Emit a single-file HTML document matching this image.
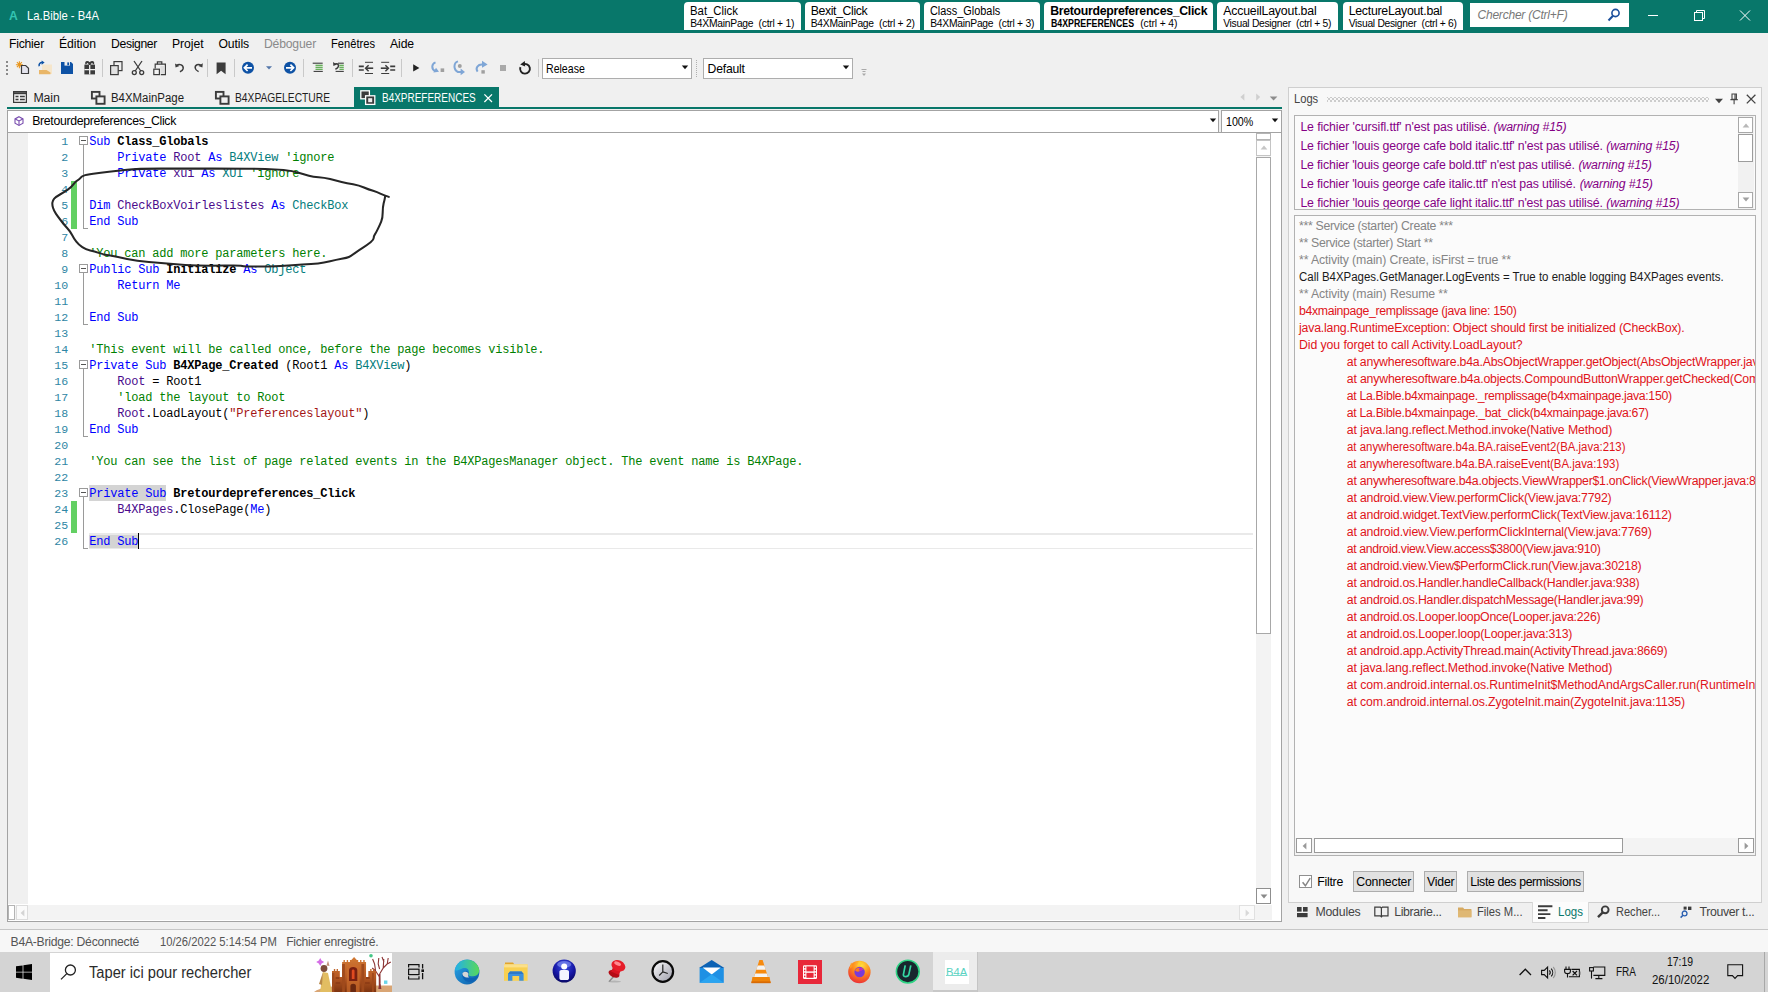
<!DOCTYPE html>
<html><head><meta charset="utf-8"><title>La.Bible - B4A</title>
<style>
html,body{margin:0;padding:0;}
body{width:1768px;height:992px;position:relative;overflow:hidden;background:#f0f0f0;font-family:"Liberation Sans",sans-serif;font-size:12px;color:#000;}
.root{position:absolute;left:0;top:0;width:1768px;height:992px;overflow:hidden;}
.a{position:absolute;}
.t{position:absolute;white-space:pre;}
svg{position:absolute;overflow:visible;}
.k{color:#0000ff;} .c{color:#008000;} .ty{color:#037c7c;} .v{color:#4a0a8c;} .s{color:#a31515;} .b{font-weight:bold;color:#000;}
</style></head><body><div class="root">
<div class="a" style="left:0px;top:0px;width:1768px;height:33px;background:#08776a;"></div>
<span class="t" style="left:8.8px;top:8px;font-size:13.2px;line-height:16px;color:#34c4b2;font-weight:bold;transform-origin:0 50%;transform:scaleX(0.9233);">A</span>
<span class="t" style="left:26.8px;top:8px;font-size:12.4px;line-height:16px;color:#fff;transform-origin:0 50%;transform:scaleX(0.9089);">La.Bible - B4A</span>
<div class="a" style="left:684px;top:2px;width:116.5px;height:27.5px;background:#fff;border-radius:4px 4px 0 0;"></div>
<span class="t" style="left:690.2px;top:3.2px;font-size:12.3px;line-height:16px;color:#000;transform-origin:0 50%;transform:scaleX(0.9239);">Bat_Click</span>
<span class="t" style="left:690.2px;top:16.2px;font-size:10.3px;line-height:16px;color:#000;letter-spacing:-0.244px;">B4XMainPage  (ctrl + 1)</span>
<div class="a" style="left:804.5px;top:2px;width:115.5px;height:27.5px;background:#fff;border-radius:4px 4px 0 0;"></div>
<span class="t" style="left:810.7px;top:3.2px;font-size:12.3px;line-height:16px;color:#000;letter-spacing:-0.375px;">Bexit_Click</span>
<span class="t" style="left:810.7px;top:16.2px;font-size:10.3px;line-height:16px;color:#000;letter-spacing:-0.244px;">B4XMainPage  (ctrl + 2)</span>
<div class="a" style="left:924px;top:2px;width:116px;height:27.5px;background:#fff;border-radius:4px 4px 0 0;"></div>
<span class="t" style="left:930.2px;top:3.2px;font-size:12.3px;line-height:16px;color:#000;transform-origin:0 50%;transform:scaleX(0.8865);">Class_Globals</span>
<span class="t" style="left:930.2px;top:16.2px;font-size:10.3px;line-height:16px;color:#000;letter-spacing:-0.244px;">B4XMainPage  (ctrl + 3)</span>
<div class="a" style="left:1044px;top:2px;width:168.5px;height:27.5px;background:#fff;border-radius:4px 4px 0 0;"></div>
<span class="t" style="left:1050.2px;top:3.2px;font-size:12.3px;line-height:16px;color:#000;font-weight:bold;letter-spacing:-0.297px;">Bretourdepreferences_Click</span>
<div class="a" style="left:1217px;top:2px;width:120.5px;height:27.5px;background:#fff;border-radius:4px 4px 0 0;"></div>
<span class="t" style="left:1223.2px;top:3.2px;font-size:12.3px;line-height:16px;color:#000;letter-spacing:-0.182px;">AccueilLayout.bal</span>
<span class="t" style="left:1223.2px;top:16.2px;font-size:10.3px;line-height:16px;color:#000;letter-spacing:-0.285px;">Visual Designer  (ctrl + 5)</span>
<div class="a" style="left:1342.5px;top:2px;width:120.0px;height:27.5px;background:#fff;border-radius:4px 4px 0 0;"></div>
<span class="t" style="left:1348.7px;top:3.2px;font-size:12.3px;line-height:16px;color:#000;letter-spacing:-0.257px;">LectureLayout.bal</span>
<span class="t" style="left:1348.7px;top:16.2px;font-size:10.3px;line-height:16px;color:#000;letter-spacing:-0.285px;">Visual Designer  (ctrl + 6)</span>
<span class="t" style="left:1050.5px;top:16.2px;font-size:10.3px;line-height:16px;color:#000;font-weight:bold;transform-origin:0 50%;transform:scaleX(0.8532);">B4XPREFERENCES</span>
<span class="t" style="left:1140.3px;top:16.2px;font-size:10.3px;line-height:16px;color:#000;letter-spacing:-0.105px;">(ctrl + 4)</span>
<div class="a" style="left:1470px;top:3px;width:159px;height:24px;background:#fff;"></div>
<span class="t" style="left:1477.5px;top:7px;font-size:12px;line-height:16px;color:#777;font-style:italic;letter-spacing:-0.217px;">Chercher (Ctrl+F)</span>
<svg style="left:1606px;top:7px" width="16" height="16" viewBox="0 0 16 16" fill="none" stroke="#1b4f9c" stroke-width="1.6"><circle cx="9.5" cy="6" r="3.6"/><path d="M7 8.8L2.5 13.5" stroke-width="2"/></svg>
<svg style="left:1640px;top:0" width="128" height="33" viewBox="0 0 128 33" fill="none" stroke="#fff" stroke-width="1"><path d="M8 15.5h10"/><rect x="54.5" y="12.5" width="8" height="8"/><path d="M56.5 12.5v-2h8v8h-2"/><path d="M100 10.5l10 10M110 10.5l-10 10"/></svg>
<span class="t" style="left:9px;top:35.7px;font-size:12.2px;line-height:16px;color:#000;letter-spacing:-0.225px;">Fichier</span>
<span class="t" style="left:59px;top:35.7px;font-size:12.2px;line-height:16px;color:#000;letter-spacing:-0.038px;">Édition</span>
<span class="t" style="left:111px;top:35.7px;font-size:12.2px;line-height:16px;color:#000;letter-spacing:-0.348px;">Designer</span>
<span class="t" style="left:172px;top:35.7px;font-size:12.2px;line-height:16px;color:#000;letter-spacing:-0.057px;">Projet</span>
<span class="t" style="left:218.5px;top:35.7px;font-size:12.2px;line-height:16px;color:#000;letter-spacing:-0.109px;">Outils</span>
<span class="t" style="left:264px;top:35.7px;font-size:12.2px;line-height:16px;color:#8a8a8a;letter-spacing:-0.191px;">Déboguer</span>
<span class="t" style="left:331px;top:35.7px;font-size:12.2px;line-height:16px;color:#000;transform-origin:0 50%;transform:scaleX(0.9146);">Fenêtres</span>
<span class="t" style="left:390px;top:35.7px;font-size:12.2px;line-height:16px;color:#000;letter-spacing:-0.102px;">Aide</span>
<div class="a" style="left:6.3px;top:61.2px;width:1.8px;height:1.8px;background:#8a8a8a;"></div>
<div class="a" style="left:6.3px;top:65.2px;width:1.8px;height:1.8px;background:#8a8a8a;"></div>
<div class="a" style="left:6.3px;top:69.2px;width:1.8px;height:1.8px;background:#8a8a8a;"></div>
<div class="a" style="left:6.3px;top:73.2px;width:1.8px;height:1.8px;background:#8a8a8a;"></div>
<svg style="left:14px;top:60px" width="16" height="16" viewBox="0 0 16 16" ><g stroke="#e8961e" stroke-width="1.1"><path d="M5.4 1.2v7M1.9 4.7h7M2.9 2.2l5 5M7.900 2.2l-5 5"/></g><path d="M7.5 5.5h4.2l2.8 2.8v5.2h-7z" fill="#e4e4ee" stroke="#3c3c3c" stroke-width="1.2"/></svg>
<svg style="left:37px;top:60px" width="16" height="16" viewBox="0 0 16 16" ><path d="M5 4.5h10v9.5h-10z" fill="#f6e6cb"/><path d="M2 10h7.5l4 2.6v1.6h-11.5z" fill="#e9b668"/><path d="M2.2 6.2c-.6-2 .8-4 3.4-3.6" fill="none" stroke="#0e52a5" stroke-width="1.5"/><path d="M4.6 0.6l3 2-3 2.2z" fill="#0e52a5"/></svg>
<svg style="left:59px;top:60px" width="16" height="16" viewBox="0 0 16 16" ><path d="M2 2h10l2 2v10h-12z" fill="#0e52a5"/><rect x="5.5" y="2" width="5.5" height="3.6" fill="#f0f0f0"/><rect x="8.3" y="2.4" width="1.8" height="2.8" fill="#0e52a5"/></svg>
<svg style="left:80.6px;top:60px" width="16" height="16" viewBox="0 0 16 16" ><rect x="3.400" y="4.600" width="10.600" height="9.800" fill="#3c3c3c"/><path d="M8.700 4.600v9.800M3.400 9.700h10.600" stroke="#f0f0f0" stroke-width="1.300"/><path d="M8.700 4.800c-.6-3.600-4.800-3.600-3.400-.8M8.700 4.800c.6-3.600 4.800-3.600 3.400-.8" fill="none" stroke="#3c3c3c" stroke-width="1.800"/></svg>
<div class="a" style="left:102.0px;top:59px;width:1px;height:18px;background:#c9c9c9;"></div>
<svg style="left:108px;top:60px" width="16" height="16" viewBox="0 0 16 16" ><rect x="6" y="1.6" width="8" height="9" fill="#f0f0f0" stroke="#3c3c3c" stroke-width="1.2"/><rect x="2.6" y="5.6" width="7.6" height="9" fill="#e2e2e2" stroke="#3c3c3c" stroke-width="1.2"/></svg>
<svg style="left:129.8px;top:60px" width="16" height="16" viewBox="0 0 16 16" ><g fill="none" stroke="#3c3c3c" stroke-width="1.3"><path d="M4 1l6.8 10M12 1l-6.8 10"/><circle cx="4.3" cy="12.6" r="2"/><circle cx="11.7" cy="12.6" r="2"/></g></svg>
<svg style="left:150.7px;top:60px" width="16" height="16" viewBox="0 0 16 16" ><g fill="none" stroke="#3c3c3c" stroke-width="1.200"><path d="M6.400 4.200v-2.400h4.400v2.400"/><path d="M4.200 8.600v-4.400h10.200v10.400h-4.600"/><rect x="2.800" y="9.200" width="5.600" height="5.400" fill="#f4f4f4"/></g><rect x="9.400" y="6" width="4" height="7.600" fill="#dedede"/></svg>
<svg style="left:171.5px;top:60px" width="16" height="16" viewBox="0 0 16 16" ><path d="M4.5 5.5c3-2.4 7.4-.4 6.6 3.2-.4 1.6-1.6 2.6-3.2 3" fill="none" stroke="#3c3c3c" stroke-width="1.5"/><path d="M3 3.4l.6 4.2 3.8-1.6z" fill="#3c3c3c"/></svg>
<svg style="left:189.7px;top:60px" width="16" height="16" viewBox="0 0 16 16" ><path d="M11.2 5.4c-2.8-2-6.4-.6-6 2.6.2 1.6 1.6 2.8 3.4 3.6" fill="none" stroke="#3c3c3c" stroke-width="1.5"/><path d="M12.8 3.2l-.4 4.4-4-1.6z" fill="#3c3c3c"/></svg>
<div class="a" style="left:206.9px;top:59px;width:1px;height:18px;background:#c9c9c9;"></div>
<svg style="left:213.4px;top:60px" width="16" height="16" viewBox="0 0 16 16" ><path d="M3.600 2.400h9v11.800l-4.500-3.400-4.500 3.400z" fill="#3c3c3c"/></svg>
<div class="a" style="left:234.1px;top:59px;width:1px;height:18px;background:#c9c9c9;"></div>
<svg style="left:240px;top:60px" width="16" height="16" viewBox="0 0 16 16" ><circle cx="8" cy="7.800" r="6" fill="#0e52a5"/><path d="M12 7.8h-7M7.6 4.6l-3.2 3.2 3.2 3.2" fill="none" stroke="#fff" stroke-width="1.7"/></svg>
<svg style="left:261px;top:60px" width="16" height="16" viewBox="0 0 16 16" ><path d="M5 6.2h6l-3 3.2z" fill="#5577aa"/></svg>
<svg style="left:282px;top:60px" width="16" height="16" viewBox="0 0 16 16" ><circle cx="8" cy="7.800" r="6" fill="#0e52a5"/><path d="M4 7.8h7M8.4 4.6l3.2 3.2-3.2 3.2" fill="none" stroke="#fff" stroke-width="1.7"/></svg>
<div class="a" style="left:303.0px;top:59px;width:1px;height:18px;background:#c9c9c9;"></div>
<svg style="left:309.5px;top:60px" width="16" height="16" viewBox="0 0 16 16" ><g stroke-width="1.1"><path d="M2.7 3.2h10" stroke="#3c3c3c"/><path d="M5.5 5.3h7.2M5.5 7.3h7.2M5.5 9.3h7.2" stroke="#3a9a2a"/><path d="M3.6 11.4h9.2" stroke="#3c3c3c"/></g></svg>
<svg style="left:331.4px;top:60px" width="16" height="16" viewBox="0 0 16 16" ><g stroke-width="1.100"><path d="M7 3.200h5.800" stroke="#3c3c3c"/><path d="M8.400 5.300h4.400M8.400 7.300h4.400M8.400 9.300h4.400" stroke="#3a9a2a"/><path d="M4.600 11.400h8.200" stroke="#3c3c3c"/></g><path d="M3.400 4.400c2.200-1.600 4.800-.2 4 2.200-.4 1.200-1.600 2-3 2.600" fill="none" stroke="#3c3c3c" stroke-width="1.500"/><path d="M2 2l.4 4 3.400-1.600z" fill="#3c3c3c"/></svg>
<div class="a" style="left:351.7px;top:59px;width:1px;height:18px;background:#c9c9c9;"></div>
<svg style="left:358px;top:60px" width="16" height="16" viewBox="0 0 16 16" ><g stroke="#3c3c3c"><path d="M7 2.3h8M7 13.5h8" stroke-width="1"/><path d="M.8 6.4h5M.8 10h5" stroke-width="1.7"/><path d="M15.2 8.2h-7" stroke-width="1.6"/><path d="M10.6 5.2l-3 3 3 3" fill="none" stroke-width="1.5"/></g></svg>
<svg style="left:379.7px;top:60px" width="16" height="16" viewBox="0 0 16 16" ><g stroke="#3c3c3c"><path d="M1.2 2.3h8M1.2 13.5h8" stroke-width="1"/><path d="M10.2 6.4h5M10.2 10h5" stroke-width="1.7"/><path d="M.8 8.2h7" stroke-width="1.6"/><path d="M5.4 5.2l3 3-3 3" fill="none" stroke-width="1.5"/></g></svg>
<div class="a" style="left:400.9px;top:59px;width:1px;height:18px;background:#c9c9c9;"></div>
<svg style="left:407.7px;top:60px" width="16" height="16" viewBox="0 0 16 16" ><path d="M5.2 4.2l6.2 3.7-6.2 3.7z" fill="#222"/></svg>
<svg style="left:428.6px;top:60px" width="16" height="16" viewBox="0 0 16 16" ><path d="M6.5 2.4c-4 1.6-4.4 6.4-.4 8.6" fill="none" stroke="#7fa6d6" stroke-width="2"/><path d="M4.4 12.4l5.6-.6-3-4z" fill="#7fa6d6"/><rect x="11.6" y="8.4" width="3.6" height="3.6" fill="#a0a0a0"/></svg>
<svg style="left:450.7px;top:60px" width="16" height="16" viewBox="0 0 16 16" ><path d="M7 1.4c-4.4 1.2-5 8 0 10.6h3" fill="none" stroke="#7fa6d6" stroke-width="2"/><path d="M9.6 8.6l4.4 3.4-4.4 3.2z" fill="#7fa6d6"/><circle cx="8.8" cy="6" r="2" fill="#a0a0a0"/></svg>
<svg style="left:472.7px;top:60px" width="16" height="16" viewBox="0 0 16 16" ><path d="M4.6 11.6c-2.6-3.6.4-7.4 5-7" fill="none" stroke="#7fa6d6" stroke-width="2"/><path d="M9 .8l5.6 3.6-5.6 3.4z" fill="#7fa6d6"/><rect x="8.4" y="10.2" width="3.4" height="3.4" fill="#a0a0a0"/></svg>
<div class="a" style="left:500px;top:65.2px;width:6px;height:5.6px;background:#a9a9a9;"></div>
<svg style="left:517.1px;top:60px" width="16" height="16" viewBox="0 0 16 16" ><path d="M5.600 4.500a4.900 4.900 0 1 1-2.200 2.600" fill="none" stroke="#222" stroke-width="1.900"/><path d="M7.800 1l-4.600 3.600 5 1.800z" fill="#222"/></svg>
<div class="a" style="left:538.0px;top:59px;width:1px;height:18px;background:#c9c9c9;"></div>
<div class="a" style="left:542.3px;top:57.5px;width:149.5px;height:21.0px;background:#fff;border:1px solid #adadad;box-sizing:border-box;"></div>
<span class="t" style="left:546.2px;top:60.9px;font-size:12.2px;line-height:16px;color:#000;transform-origin:0 50%;transform:scaleX(0.8676);">Release</span>
<svg style="left:681.4px;top:65.4px" width="8" height="5" viewBox="0 0 8 5"><path d="M.8 .6h6.4l-3.2 3.6z" fill="#111"/></svg>
<div class="a" style="left:696px;top:60px;width:1px;height:1px;background:#b0b0b0;"></div>
<div class="a" style="left:696px;top:62px;width:1px;height:1px;background:#b0b0b0;"></div>
<div class="a" style="left:696px;top:64px;width:1px;height:1px;background:#b0b0b0;"></div>
<div class="a" style="left:696px;top:66px;width:1px;height:1px;background:#b0b0b0;"></div>
<div class="a" style="left:696px;top:68px;width:1px;height:1px;background:#b0b0b0;"></div>
<div class="a" style="left:696px;top:70px;width:1px;height:1px;background:#b0b0b0;"></div>
<div class="a" style="left:696px;top:72px;width:1px;height:1px;background:#b0b0b0;"></div>
<div class="a" style="left:696px;top:74px;width:1px;height:1px;background:#b0b0b0;"></div>
<div class="a" style="left:696px;top:76px;width:1px;height:1px;background:#b0b0b0;"></div>
<div class="a" style="left:703.2px;top:57.5px;width:149.5px;height:21.0px;background:#fff;border:1px solid #adadad;box-sizing:border-box;"></div>
<span class="t" style="left:707.6px;top:60.9px;font-size:12.2px;line-height:16px;color:#000;letter-spacing:-0.204px;">Default</span>
<svg style="left:842.4px;top:65.4px" width="8" height="5" viewBox="0 0 8 5"><path d="M.8 .6h6.4l-3.2 3.6z" fill="#111"/></svg>
<svg style="left:860px;top:68px" width="9" height="9" viewBox="0 0 9 9"><path d="M1.5 1.5h5M2.5 3.5h3" stroke="#aaa" stroke-width="1"/><path d="M2 5.5h4l-2 2.4z" fill="#aaa"/></svg>
<svg style="left:13px;top:91px" width="14" height="12" viewBox="0 0 14 12" fill="none" stroke="#3c3c3c"><rect x=".6" y=".6" width="12.8" height="10.8" stroke-width="1.2"/><path d="M.6 2.2h12.8" stroke-width="2"/><path d="M2.5 5.5h3M2.5 8.5h3M7 5.5h4.8M7 8.5h4.8" stroke-width="1.3"/></svg>
<span class="t" style="left:33.4px;top:89.6px;font-size:12.3px;line-height:16px;color:#1e1e1e;letter-spacing:-0.089px;">Main</span>
<svg style="left:91px;top:91px" width="15" height="14" viewBox="0 0 15 14" fill="none" stroke="#3c3c3c" stroke-width="1.9"><rect x=".9" y=".9" width="7.6" height="6.6" fill="none"/><rect x="5.4" y="5.4" width="8.2" height="7.4" fill="#f0f0f0"/></svg>
<span class="t" style="left:111.1px;top:89.6px;font-size:12.3px;line-height:16px;color:#1e1e1e;transform-origin:0 50%;transform:scaleX(0.9285);">B4XMainPage</span>
<svg style="left:215px;top:91px" width="15" height="14" viewBox="0 0 15 14" fill="none" stroke="#3c3c3c" stroke-width="1.9"><rect x=".9" y=".9" width="7.6" height="6.6" fill="none"/><rect x="5.4" y="5.4" width="8.2" height="7.4" fill="#f0f0f0"/></svg>
<span class="t" style="left:235px;top:89.6px;font-size:12.3px;line-height:16px;color:#1e1e1e;transform-origin:0 50%;transform:scaleX(0.8340);">B4XPAGELECTURE</span>
<div class="a" style="left:354px;top:87px;width:144.8px;height:22px;background:#08776a;"></div>
<svg style="left:360.4px;top:90.3px" width="16" height="16" viewBox="0 0 16 16" stroke="#fff" stroke-width="1.3"><rect x=".8" y=".8" width="8.6" height="8" fill="#3a3a3a"/><rect x="5.6" y="5.8" width="9.2" height="8.6" fill="#3a3a3a"/><rect x="8.2" y="8.2" width="4" height="4" fill="#eee" stroke="none"/></svg>
<span class="t" style="left:381.5px;top:89.5px;font-size:12.3px;line-height:16px;color:#fff;transform-origin:0 50%;transform:scaleX(0.8113);">B4XPREFERENCES</span>
<svg style="left:484px;top:93.7px" width="8.4" height="8.4" viewBox="0 0 8.4 8.4" stroke="#fff" stroke-width="1.3"><path d="M.4 .4l7.6 7.6M8 .4l-7.6 7.6"/></svg>
<div class="a" style="left:6.5px;top:107.2px;width:1275.5px;height:2.2px;background:#08776a;"></div>
<svg style="left:1238px;top:92px" width="42" height="12" viewBox="0 0 42 12"><path d="M6.4 1.4v7.4l-4-3.7z" fill="#cfcfcf"/><path d="M18.2 1.4v7.4l4-3.7z" fill="#cfcfcf"/><path d="M31.8 4.6h7.6l-3.8 4z" fill="#8c8c8c"/></svg>
<div class="a" style="left:7px;top:109.5px;width:1212px;height:23px;background:#fff;border:1px solid #a3a3a3;box-sizing:border-box;"></div>
<div class="a" style="left:1221px;top:109.5px;width:60.5px;height:23px;background:#fff;border:1px solid #a3a3a3;box-sizing:border-box;"></div>
<svg style="left:13.6px;top:116.2px" width="10" height="10" viewBox="0 0 10 10" fill="none" stroke="#7a4fb0" stroke-width="1.1"><path d="M5 .7l4 2.2v4.3l-4 2.2-4-2.2v-4.3z"/><path d="M1.2 3l3.8 2 3.8-2M5 5v4.2"/></svg>
<span class="t" style="left:32.2px;top:113px;font-size:12.3px;line-height:16px;color:#000;letter-spacing:-0.332px;">Bretourdepreferences_Click</span>
<span class="t" style="left:1225.6px;top:113.6px;font-size:12.3px;line-height:16px;color:#000;transform-origin:0 50%;transform:scaleX(0.8680);">100%</span>
<svg style="left:1208.6px;top:118.4px" width="8" height="5" viewBox="0 0 8 5"><path d="M.8 .5h6.4l-3.2 3.7z" fill="#111"/></svg>
<svg style="left:1270.6px;top:118.4px" width="8" height="5" viewBox="0 0 8 5"><path d="M.8 .5h6.4l-3.2 3.7z" fill="#111"/></svg>
<div class="a" style="left:7px;top:132px;width:1274.5px;height:790px;background:#fff;border:1px solid #a3a3a3;box-sizing:border-box;"></div>
<div class="a" style="left:8px;top:133px;width:19.5px;height:771px;background:#f0f0f0;"></div>
<div class="a" style="left:1256px;top:133px;width:15px;height:771px;background:#f3f3f3;"></div>
<div class="a" style="left:1256.2px;top:133.2px;width:14.6px;height:6.4px;background:#fff;border:1px solid #b4b4b4;box-sizing:border-box;"></div>
<div class="a" style="left:1256.2px;top:140.4px;width:14.6px;height:15.2px;background:#fff;border:1px solid #c4c4c4;box-sizing:border-box;"></div>
<svg style="left:1259.5px;top:145px" width="8" height="5" viewBox="0 0 8 5"><path d="M.6 4.4h6.8l-3.4-3.8z" fill="#c6c6c6"/></svg>
<div class="a" style="left:1256.2px;top:157.2px;width:14.6px;height:476.5px;background:#fff;border:1px solid #a8a8a8;box-sizing:border-box;"></div>
<div class="a" style="left:1256.2px;top:888.2px;width:14.6px;height:15.6px;background:#fff;border:1px solid #8f8f8f;box-sizing:border-box;"></div>
<svg style="left:1259.5px;top:893.6px" width="8" height="5" viewBox="0 0 8 5"><path d="M.6 .6h6.8l-3.4 3.8z" fill="#8a8a8a"/></svg>
<div class="a" style="left:8px;top:904.5px;width:1264px;height:15.5px;background:#f3f3f3;"></div>
<div class="a" style="left:8.2px;top:905px;width:6.4px;height:14.8px;background:#fff;border:1px solid #b4b4b4;box-sizing:border-box;"></div>
<div class="a" style="left:15.6px;top:905px;width:12.6px;height:14.8px;background:#fafafa;border:1px solid #dcdcdc;box-sizing:border-box;"></div>
<svg style="left:19.5px;top:908.8px" width="5" height="8" viewBox="0 0 5 8"><path d="M4.4 .6v6.8l-3.8-3.4z" fill="#d4d4d4"/></svg>
<div class="a" style="left:1239.4px;top:905px;width:15.4px;height:14.8px;background:#fafafa;border:1px solid #e0e0e0;box-sizing:border-box;"></div>
<svg style="left:1245px;top:908.8px" width="5" height="8" viewBox="0 0 5 8"><path d="M.6 .6v6.8l3.8-3.4z" fill="#d8d8d8"/></svg>
<div class="a" style="left:89px;top:485px;width:77px;height:16px;background:#d4d4d4;"></div>
<div class="a" style="left:89px;top:533px;width:49.2px;height:16px;background:#d4d4d4;"></div>
<div class="a" style="left:89px;top:533.2px;width:1164px;height:1.6px;background:#e9e9e9;"></div>
<div class="a" style="left:89px;top:547.6px;width:1164px;height:1.6px;background:#e9e9e9;"></div>
<div class="a" style="left:137.8px;top:533px;width:1.2px;height:16px;background:#000;"></div>
<div class="a" style="left:71px;top:181px;width:6px;height:48px;background:#63d063;"></div>
<div class="a" style="left:71px;top:501px;width:6px;height:32px;background:#63d063;"></div>
<div class="a" style="left:83px;top:145px;width:1px;height:83px;background:#9a9a9a;"></div>
<div class="a" style="left:83px;top:228px;width:5px;height:1px;background:#9a9a9a;"></div>
<div class="a" style="left:79px;top:136px;width:9px;height:9px;background:#fff;border:1px solid #9a9a9a;box-sizing:border-box;"></div>
<div class="a" style="left:81px;top:140px;width:5px;height:1px;background:#555;"></div>
<div class="a" style="left:83px;top:273px;width:1px;height:51px;background:#9a9a9a;"></div>
<div class="a" style="left:83px;top:324px;width:5px;height:1px;background:#9a9a9a;"></div>
<div class="a" style="left:79px;top:264px;width:9px;height:9px;background:#fff;border:1px solid #9a9a9a;box-sizing:border-box;"></div>
<div class="a" style="left:81px;top:268px;width:5px;height:1px;background:#555;"></div>
<div class="a" style="left:83px;top:369px;width:1px;height:67px;background:#9a9a9a;"></div>
<div class="a" style="left:83px;top:436px;width:5px;height:1px;background:#9a9a9a;"></div>
<div class="a" style="left:79px;top:360px;width:9px;height:9px;background:#fff;border:1px solid #9a9a9a;box-sizing:border-box;"></div>
<div class="a" style="left:81px;top:364px;width:5px;height:1px;background:#555;"></div>
<div class="a" style="left:83px;top:497px;width:1px;height:51px;background:#9a9a9a;"></div>
<div class="a" style="left:83px;top:548px;width:5px;height:1px;background:#9a9a9a;"></div>
<div class="a" style="left:79px;top:488px;width:9px;height:9px;background:#fff;border:1px solid #9a9a9a;box-sizing:border-box;"></div>
<div class="a" style="left:81px;top:492px;width:5px;height:1px;background:#555;"></div>
<span class="t" style="left:61.2px;top:134.4px;font-size:11.6px;line-height:16px;color:#2e86a4;font-family:'Liberation Mono',monospace;letter-spacing:0.031px;">1</span>
<span class="t" style="left:89.3px;top:134.4px;font-size:12px;line-height:16px;color:#000;font-family:'Liberation Mono',monospace;letter-spacing:-0.202px;"><span class="k">Sub</span> <span class="b">Class_Globals</span></span>
<span class="t" style="left:61.2px;top:150.4px;font-size:11.6px;line-height:16px;color:#2e86a4;font-family:'Liberation Mono',monospace;letter-spacing:0.031px;">2</span>
<span class="t" style="left:89.3px;top:150.4px;font-size:12px;line-height:16px;color:#000;font-family:'Liberation Mono',monospace;letter-spacing:-0.203px;">    <span class="k">Private</span> <span class="v">Root</span> <span class="k">As</span> <span class="ty">B4XView</span> <span class="c">'ignore</span></span>
<span class="t" style="left:61.2px;top:166.4px;font-size:11.6px;line-height:16px;color:#2e86a4;font-family:'Liberation Mono',monospace;letter-spacing:0.031px;">3</span>
<span class="t" style="left:89.3px;top:166.4px;font-size:12px;line-height:16px;color:#000;font-family:'Liberation Mono',monospace;letter-spacing:-0.203px;">    <span class="k">Private</span> <span class="v">xui</span> <span class="k">As</span> <span class="ty">XUI</span> <span class="c">'ignore</span></span>
<span class="t" style="left:61.2px;top:182.4px;font-size:11.6px;line-height:16px;color:#2e86a4;font-family:'Liberation Mono',monospace;letter-spacing:0.031px;">4</span>
<span class="t" style="left:61.2px;top:198.4px;font-size:11.6px;line-height:16px;color:#2e86a4;font-family:'Liberation Mono',monospace;letter-spacing:0.031px;">5</span>
<span class="t" style="left:89.3px;top:198.4px;font-size:12px;line-height:16px;color:#000;font-family:'Liberation Mono',monospace;letter-spacing:-0.202px;"><span class="k">Dim</span> <span class="v">CheckBoxVoirleslistes</span> <span class="k">As</span> <span class="ty">CheckBox</span></span>
<span class="t" style="left:61.2px;top:214.4px;font-size:11.6px;line-height:16px;color:#2e86a4;font-family:'Liberation Mono',monospace;letter-spacing:0.031px;">6</span>
<span class="t" style="left:89.3px;top:214.4px;font-size:12px;line-height:16px;color:#000;font-family:'Liberation Mono',monospace;letter-spacing:-0.203px;"><span class="k">End Sub</span></span>
<span class="t" style="left:61.2px;top:230.4px;font-size:11.6px;line-height:16px;color:#2e86a4;font-family:'Liberation Mono',monospace;letter-spacing:0.031px;">7</span>
<span class="t" style="left:61.2px;top:246.4px;font-size:11.6px;line-height:16px;color:#2e86a4;font-family:'Liberation Mono',monospace;letter-spacing:0.031px;">8</span>
<span class="t" style="left:89.3px;top:246.4px;font-size:12px;line-height:16px;color:#000;font-family:'Liberation Mono',monospace;letter-spacing:-0.201px;"><span class="c">'You can add more parameters here.</span></span>
<span class="t" style="left:61.2px;top:262.4px;font-size:11.6px;line-height:16px;color:#2e86a4;font-family:'Liberation Mono',monospace;letter-spacing:0.031px;">9</span>
<span class="t" style="left:89.3px;top:262.4px;font-size:12px;line-height:16px;color:#000;font-family:'Liberation Mono',monospace;letter-spacing:-0.202px;"><span class="k">Public Sub</span> <span class="b">Initialize</span> <span class="k">As</span> <span class="ty">Object</span></span>
<span class="t" style="left:54.2px;top:278.4px;font-size:11.6px;line-height:16px;color:#2e86a4;font-family:'Liberation Mono',monospace;letter-spacing:0.039px;">10</span>
<span class="t" style="left:89.3px;top:278.4px;font-size:12px;line-height:16px;color:#000;font-family:'Liberation Mono',monospace;letter-spacing:-0.202px;">    <span class="k">Return Me</span></span>
<span class="t" style="left:54.2px;top:294.4px;font-size:11.6px;line-height:16px;color:#2e86a4;font-family:'Liberation Mono',monospace;letter-spacing:0.039px;">11</span>
<span class="t" style="left:54.2px;top:310.4px;font-size:11.6px;line-height:16px;color:#2e86a4;font-family:'Liberation Mono',monospace;letter-spacing:0.039px;">12</span>
<span class="t" style="left:89.3px;top:310.4px;font-size:12px;line-height:16px;color:#000;font-family:'Liberation Mono',monospace;letter-spacing:-0.203px;"><span class="k">End Sub</span></span>
<span class="t" style="left:54.2px;top:326.4px;font-size:11.6px;line-height:16px;color:#2e86a4;font-family:'Liberation Mono',monospace;letter-spacing:0.039px;">13</span>
<span class="t" style="left:54.2px;top:342.4px;font-size:11.6px;line-height:16px;color:#2e86a4;font-family:'Liberation Mono',monospace;letter-spacing:0.039px;">14</span>
<span class="t" style="left:89.3px;top:342.4px;font-size:12px;line-height:16px;color:#000;font-family:'Liberation Mono',monospace;letter-spacing:-0.201px;"><span class="c">'This event will be called once, before the page becomes visible.</span></span>
<span class="t" style="left:54.2px;top:358.4px;font-size:11.6px;line-height:16px;color:#2e86a4;font-family:'Liberation Mono',monospace;letter-spacing:0.039px;">15</span>
<span class="t" style="left:89.3px;top:358.4px;font-size:12px;line-height:16px;color:#000;font-family:'Liberation Mono',monospace;letter-spacing:-0.202px;"><span class="k">Private Sub</span> <span class="b">B4XPage_Created</span> (Root1 <span class="k">As</span> <span class="ty">B4XView</span>)</span>
<span class="t" style="left:54.2px;top:374.4px;font-size:11.6px;line-height:16px;color:#2e86a4;font-family:'Liberation Mono',monospace;letter-spacing:0.039px;">16</span>
<span class="t" style="left:89.3px;top:374.4px;font-size:12px;line-height:16px;color:#000;font-family:'Liberation Mono',monospace;letter-spacing:-0.202px;">    <span class="v">Root</span> = Root1</span>
<span class="t" style="left:54.2px;top:390.4px;font-size:11.6px;line-height:16px;color:#2e86a4;font-family:'Liberation Mono',monospace;letter-spacing:0.039px;">17</span>
<span class="t" style="left:89.3px;top:390.4px;font-size:12px;line-height:16px;color:#000;font-family:'Liberation Mono',monospace;letter-spacing:-0.201px;">    <span class="c">'load the layout to Root</span></span>
<span class="t" style="left:54.2px;top:406.4px;font-size:11.6px;line-height:16px;color:#2e86a4;font-family:'Liberation Mono',monospace;letter-spacing:0.039px;">18</span>
<span class="t" style="left:89.3px;top:406.4px;font-size:12px;line-height:16px;color:#000;font-family:'Liberation Mono',monospace;letter-spacing:-0.202px;">    <span class="v">Root</span>.LoadLayout(<span class="s">"Preferenceslayout"</span>)</span>
<span class="t" style="left:54.2px;top:422.4px;font-size:11.6px;line-height:16px;color:#2e86a4;font-family:'Liberation Mono',monospace;letter-spacing:0.039px;">19</span>
<span class="t" style="left:89.3px;top:422.4px;font-size:12px;line-height:16px;color:#000;font-family:'Liberation Mono',monospace;letter-spacing:-0.203px;"><span class="k">End Sub</span></span>
<span class="t" style="left:54.2px;top:438.4px;font-size:11.6px;line-height:16px;color:#2e86a4;font-family:'Liberation Mono',monospace;letter-spacing:0.039px;">20</span>
<span class="t" style="left:54.2px;top:454.4px;font-size:11.6px;line-height:16px;color:#2e86a4;font-family:'Liberation Mono',monospace;letter-spacing:0.039px;">21</span>
<span class="t" style="left:89.3px;top:454.4px;font-size:12px;line-height:16px;color:#000;font-family:'Liberation Mono',monospace;letter-spacing:-0.201px;"><span class="c">'You can see the list of page related events in the B4XPagesManager object. The event name is B4XPage.</span></span>
<span class="t" style="left:54.2px;top:470.4px;font-size:11.6px;line-height:16px;color:#2e86a4;font-family:'Liberation Mono',monospace;letter-spacing:0.039px;">22</span>
<span class="t" style="left:54.2px;top:486.4px;font-size:11.6px;line-height:16px;color:#2e86a4;font-family:'Liberation Mono',monospace;letter-spacing:0.039px;">23</span>
<span class="t" style="left:89.3px;top:486.4px;font-size:12px;line-height:16px;color:#000;font-family:'Liberation Mono',monospace;letter-spacing:-0.201px;"><span class="k">Private Sub</span> <span class="b">Bretourdepreferences_Click</span></span>
<span class="t" style="left:54.2px;top:502.4px;font-size:11.6px;line-height:16px;color:#2e86a4;font-family:'Liberation Mono',monospace;letter-spacing:0.039px;">24</span>
<span class="t" style="left:89.3px;top:502.4px;font-size:12px;line-height:16px;color:#000;font-family:'Liberation Mono',monospace;letter-spacing:-0.202px;">    <span class="v">B4XPages</span>.ClosePage(<span class="k">Me</span>)</span>
<span class="t" style="left:54.2px;top:518.4px;font-size:11.6px;line-height:16px;color:#2e86a4;font-family:'Liberation Mono',monospace;letter-spacing:0.039px;">25</span>
<span class="t" style="left:54.2px;top:534.4px;font-size:11.6px;line-height:16px;color:#2e86a4;font-family:'Liberation Mono',monospace;letter-spacing:0.039px;">26</span>
<span class="t" style="left:89.3px;top:534.4px;font-size:12px;line-height:16px;color:#000;font-family:'Liberation Mono',monospace;letter-spacing:-0.203px;"><span class="k">End Sub</span></span>
<svg style="left:0;top:0" width="1768" height="992" viewBox="0 0 1768 992" fill="none"><path d="M388.8 196.9Q383.3 195.1 380.3 193.6Q377.3 192.1 373.1 190.8Q368.8 189.6 364.0 187.5Q359.1 185.4 353.1 184.3Q347.0 183.2 341.6 181.9Q336.2 180.6 330.1 179.1Q324.0 177.5 318.6 177.2Q313.2 176.9 308.9 175.7Q304.7 174.5 298.6 172.7Q292.6 170.9 283.5 170.0Q274.4 169.1 265.4 168.9Q256.3 168.7 248.2 168.7Q240.0 168.7 212.6 168.6Q185.2 168.5 161.0 168.6Q136.8 168.7 127.1 169.8Q117.4 170.9 109.0 171.8Q100.5 172.7 93.2 173.8Q86.0 174.8 83.8 175.6Q81.7 176.3 80.5 177.9Q79.3 179.4 77.5 180.3Q75.7 181.2 73.6 184.2Q71.5 187.2 67.8 189.6Q64.2 192.1 60.0 194.5Q55.7 196.9 54.2 198.7Q52.7 200.5 52.4 202.7Q52.1 204.8 53.0 207.8Q53.9 210.8 56.0 213.9Q58.1 216.9 60.9 220.5Q63.6 224.1 66.9 227.8Q70.2 231.4 72.1 235.0Q73.9 238.6 76.3 241.6Q78.7 244.7 82.3 247.1Q86.0 249.5 90.2 250.4Q94.4 251.3 98.7 252.9Q102.9 254.4 110.2 255.6Q117.4 256.8 127.1 258.9Q136.8 261.0 148.9 261.9Q161.0 262.8 173.1 264.1Q185.2 265.3 197.3 265.6Q209.4 265.9 224.7 265.6Q240.0 265.3 242.1 265.9Q244.2 266.5 256.3 266.5Q268.4 266.5 280.5 265.9Q292.6 265.3 302.3 264.6Q312.0 264.0 318.0 263.4Q324.0 262.8 330.1 261.3Q336.2 259.8 341.6 258.8Q347.0 257.8 348.9 257.0Q350.7 256.2 354.9 253.1Q359.1 250.1 363.4 247.4Q367.6 244.7 370.6 242.3Q373.7 239.9 373.7 238.1Q373.7 236.2 374.9 234.4Q376.1 232.6 377.9 228.9Q379.7 225.3 381.2 221.7Q382.7 218.1 382.7 212.6Q382.7 207.2 383.6 203.6Q384.6 199.9 384.9 197.9L385.2 195.8" stroke="#262626" stroke-width="2.050" stroke-linecap="round" stroke-linejoin="round"/></svg>
<div class="a" style="left:1288px;top:87px;width:474px;height:816px;background:#f8f8f8;border:1px solid #cfcfcf;box-sizing:border-box;"></div>
<span class="t" style="left:1294.4px;top:91.2px;font-size:12.3px;line-height:16px;color:#444;transform-origin:0 50%;transform:scaleX(0.9073);">Logs</span>
<div class="a" style="left:1327px;top:97px;width:382px;height:5px;background-image:radial-gradient(circle,#b4b4b4 0.6px,transparent 0.9px),radial-gradient(circle,#b4b4b4 0.6px,transparent 0.9px);background-size:4px 4px;background-position:0 0,2px 2px;"></div>
<svg style="left:1714px;top:98px" width="10" height="6" viewBox="0 0 10 6"><path d="M1 .8h8l-4 4.4z" fill="#444"/></svg>
<svg style="left:1729px;top:93px" width="10" height="12" viewBox="0 0 10 12" fill="none" stroke="#444" stroke-width="1.1"><path d="M3 1h4.4v5.4h-4.4zM6 1v5M1.4 6.6h7.4M5.1 6.8v4.4"/></svg>
<svg style="left:1746px;top:94px" width="10" height="10" viewBox="0 0 10 10" stroke="#444" stroke-width="1.3"><path d="M.8 .8l8.6 8.6M9.4 .8l-8.6 8.6"/></svg>
<div class="a" style="left:1294px;top:115px;width:462px;height:95px;background:#fbfbfb;border:1px solid #b2b2b2;box-sizing:border-box;"></div>
<span class="t" style="left:1300.4px;top:118.9px;font-size:12.3px;line-height:16px;color:#850085;letter-spacing:-0.110px;">Le fichier 'cursifl.ttf' n'est pas utilisé.</span>
<span class="t" style="left:1493.6px;top:118.9px;font-size:12.3px;line-height:16px;color:#850085;font-style:italic;letter-spacing:-0.184px;">(warning #15)</span>
<span class="t" style="left:1300.4px;top:137.9px;font-size:12.3px;line-height:16px;color:#850085;letter-spacing:-0.127px;">Le fichier 'louis george cafe bold italic.ttf' n'est pas utilisé.</span>
<span class="t" style="left:1606.3px;top:137.9px;font-size:12.3px;line-height:16px;color:#850085;font-style:italic;letter-spacing:-0.153px;">(warning #15)</span>
<span class="t" style="left:1300.4px;top:156.9px;font-size:12.3px;line-height:16px;color:#850085;letter-spacing:-0.142px;">Le fichier 'louis george cafe bold.ttf' n'est pas utilisé.</span>
<span class="t" style="left:1578.4px;top:156.9px;font-size:12.3px;line-height:16px;color:#850085;font-style:italic;letter-spacing:-0.153px;">(warning #15)</span>
<span class="t" style="left:1300.4px;top:175.9px;font-size:12.3px;line-height:16px;color:#850085;letter-spacing:-0.143px;">Le fichier 'louis george cafe italic.ttf' n'est pas utilisé.</span>
<span class="t" style="left:1579.7px;top:175.9px;font-size:12.3px;line-height:16px;color:#850085;font-style:italic;letter-spacing:-0.176px;">(warning #15)</span>
<span class="t" style="left:1300.4px;top:194.9px;font-size:12.3px;line-height:16px;color:#850085;letter-spacing:-0.114px;">Le fichier 'louis george cafe light italic.ttf' n'est pas utilisé.</span>
<span class="t" style="left:1606.3px;top:194.9px;font-size:12.3px;line-height:16px;color:#850085;font-style:italic;letter-spacing:-0.153px;">(warning #15)</span>
<div class="a" style="left:1295px;top:209px;width:460px;height:7px;background:#f8f8f8;"></div>
<div class="a" style="left:1294px;top:209px;width:462px;height:1px;background:#b2b2b2;"></div>
<div class="a" style="left:1738px;top:116px;width:16px;height:93px;background:#f1f1f1;"></div>
<div class="a" style="left:1738.4px;top:117px;width:14.6px;height:15.6px;background:#fff;border:1px solid #a8a8a8;box-sizing:border-box;"></div>
<svg style="left:1741.6px;top:123px" width="8" height="5" viewBox="0 0 8 5"><path d="M.6 4.4h6.8l-3.4-3.8z" fill="#b8b8b8"/></svg>
<div class="a" style="left:1738.4px;top:134.4px;width:14.6px;height:27.2px;background:#fff;border:1px solid #9c9c9c;box-sizing:border-box;"></div>
<div class="a" style="left:1738.4px;top:191.8px;width:14.6px;height:15.8px;background:#fff;border:1px solid #a8a8a8;box-sizing:border-box;"></div>
<svg style="left:1741.6px;top:197.4px" width="8" height="5" viewBox="0 0 8 5"><path d="M.6 .6h6.8l-3.4 3.8z" fill="#a0a0a0"/></svg>
<div class="a" style="left:1294px;top:215px;width:462px;height:641px;background:#fbfbfb;border:1px solid #b2b2b2;box-sizing:border-box;"></div>
<span class="t" style="left:1299px;top:218px;font-size:12.3px;line-height:16px;color:#858585;letter-spacing:-0.301px;">*** Service (starter) Create ***</span>
<span class="t" style="left:1299px;top:235px;font-size:12.3px;line-height:16px;color:#858585;letter-spacing:-0.315px;">** Service (starter) Start **</span>
<span class="t" style="left:1299px;top:252px;font-size:12.3px;line-height:16px;color:#858585;letter-spacing:-0.131px;">** Activity (main) Create, isFirst = true **</span>
<span class="t" style="left:1299px;top:269px;font-size:12.3px;line-height:16px;color:#1a1a1a;transform-origin:0 50%;transform:scaleX(0.9321);">Call B4XPages.GetManager.LogEvents = True to enable logging B4XPages events.</span>
<span class="t" style="left:1299px;top:286px;font-size:12.3px;line-height:16px;color:#858585;letter-spacing:-0.108px;">** Activity (main) Resume **</span>
<span class="t" style="left:1299px;top:303px;font-size:12.3px;line-height:16px;color:#e0141a;letter-spacing:-0.339px;">b4xmainpage_remplissage (java line: 150)</span>
<span class="t" style="left:1299px;top:320px;font-size:12.3px;line-height:16px;color:#e0141a;letter-spacing:-0.194px;">java.lang.RuntimeException: Object should first be initialized (CheckBox).</span>
<span class="t" style="left:1299px;top:337px;font-size:12.3px;line-height:16px;color:#e0141a;letter-spacing:-0.089px;">Did you forget to call Activity.LoadLayout?</span>
<span class="t" style="left:1346.8px;top:354px;font-size:12.3px;line-height:16px;color:#e0141a;letter-spacing:-0.204px;">at anywheresoftware.b4a.AbsObjectWrapper.getObject(AbsObjectWrapper.java:50)</span>
<span class="t" style="left:1346.8px;top:371px;font-size:12.3px;line-height:16px;color:#e0141a;letter-spacing:-0.176px;">at anywheresoftware.b4a.objects.CompoundButtonWrapper.getChecked(CompoundButtonWrapper.java:27)</span>
<span class="t" style="left:1346.8px;top:388px;font-size:12.3px;line-height:16px;color:#e0141a;letter-spacing:-0.327px;">at La.Bible.b4xmainpage._remplissage(b4xmainpage.java:150)</span>
<span class="t" style="left:1346.8px;top:405px;font-size:12.3px;line-height:16px;color:#e0141a;letter-spacing:-0.307px;">at La.Bible.b4xmainpage._bat_click(b4xmainpage.java:67)</span>
<span class="t" style="left:1346.8px;top:422px;font-size:12.3px;line-height:16px;color:#e0141a;letter-spacing:-0.106px;">at java.lang.reflect.Method.invoke(Native Method)</span>
<span class="t" style="left:1346.8px;top:439px;font-size:12.3px;line-height:16px;color:#e0141a;transform-origin:0 50%;transform:scaleX(0.9281);">at anywheresoftware.b4a.BA.raiseEvent2(BA.java:213)</span>
<span class="t" style="left:1346.8px;top:456px;font-size:12.3px;line-height:16px;color:#e0141a;transform-origin:0 50%;transform:scaleX(0.9283);">at anywheresoftware.b4a.BA.raiseEvent(BA.java:193)</span>
<span class="t" style="left:1346.8px;top:473px;font-size:12.3px;line-height:16px;color:#e0141a;letter-spacing:-0.252px;">at anywheresoftware.b4a.objects.ViewWrapper$1.onClick(ViewWrapper.java:80)</span>
<span class="t" style="left:1346.8px;top:490px;font-size:12.3px;line-height:16px;color:#e0141a;letter-spacing:-0.196px;">at android.view.View.performClick(View.java:7792)</span>
<span class="t" style="left:1346.8px;top:507px;font-size:12.3px;line-height:16px;color:#e0141a;letter-spacing:-0.201px;">at android.widget.TextView.performClick(TextView.java:16112)</span>
<span class="t" style="left:1346.8px;top:524px;font-size:12.3px;line-height:16px;color:#e0141a;letter-spacing:-0.185px;">at android.view.View.performClickInternal(View.java:7769)</span>
<span class="t" style="left:1346.8px;top:541px;font-size:12.3px;line-height:16px;color:#e0141a;letter-spacing:-0.367px;">at android.view.View.access$3800(View.java:910)</span>
<span class="t" style="left:1346.8px;top:558px;font-size:12.3px;line-height:16px;color:#e0141a;letter-spacing:-0.245px;">at android.view.View$PerformClick.run(View.java:30218)</span>
<span class="t" style="left:1346.8px;top:575px;font-size:12.3px;line-height:16px;color:#e0141a;letter-spacing:-0.228px;">at android.os.Handler.handleCallback(Handler.java:938)</span>
<span class="t" style="left:1346.8px;top:592px;font-size:12.3px;line-height:16px;color:#e0141a;letter-spacing:-0.242px;">at android.os.Handler.dispatchMessage(Handler.java:99)</span>
<span class="t" style="left:1346.8px;top:609px;font-size:12.3px;line-height:16px;color:#e0141a;letter-spacing:-0.222px;">at android.os.Looper.loopOnce(Looper.java:226)</span>
<span class="t" style="left:1346.8px;top:626px;font-size:12.3px;line-height:16px;color:#e0141a;letter-spacing:-0.217px;">at android.os.Looper.loop(Looper.java:313)</span>
<span class="t" style="left:1346.8px;top:643px;font-size:12.3px;line-height:16px;color:#e0141a;letter-spacing:-0.206px;">at android.app.ActivityThread.main(ActivityThread.java:8669)</span>
<span class="t" style="left:1346.8px;top:660px;font-size:12.3px;line-height:16px;color:#e0141a;letter-spacing:-0.106px;">at java.lang.reflect.Method.invoke(Native Method)</span>
<span class="t" style="left:1346.8px;top:677px;font-size:12.3px;line-height:16px;color:#e0141a;letter-spacing:-0.088px;">at com.android.internal.os.RuntimeInit$MethodAndArgsCaller.run(RuntimeInit.java:576)</span>
<span class="t" style="left:1346.8px;top:694px;font-size:12.3px;line-height:16px;color:#e0141a;letter-spacing:-0.137px;">at com.android.internal.os.ZygoteInit.main(ZygoteInit.java:1135)</span>
<div class="a" style="left:1755px;top:216px;width:6.4px;height:645px;background:#f8f8f8;"></div>
<div class="a" style="left:1755px;top:215px;width:1px;height:641px;background:#b2b2b2;"></div>
<div class="a" style="left:1761px;top:87px;width:1px;height:816px;background:#cfcfcf;"></div>
<div class="a" style="left:1762px;top:110px;width:6px;height:800px;background:#f0f0f0;"></div>
<div class="a" style="left:1295px;top:837.5px;width:460px;height:17px;background:#f3f3f3;"></div>
<div class="a" style="left:1296px;top:838px;width:16px;height:15px;background:#fff;border:1px solid #9a9a9a;box-sizing:border-box;"></div>
<svg style="left:1301.5px;top:841.8px" width="5" height="8" viewBox="0 0 5 8"><path d="M4.4 .6v6.8l-3.8-3.4z" fill="#9a9a9a"/></svg>
<div class="a" style="left:1313.5px;top:838px;width:309.5px;height:15px;background:#fff;border:1px solid #9a9a9a;box-sizing:border-box;"></div>
<div class="a" style="left:1738px;top:838px;width:16px;height:15px;background:#fff;border:1px solid #9a9a9a;box-sizing:border-box;"></div>
<svg style="left:1743.5px;top:841.8px" width="5" height="8" viewBox="0 0 5 8"><path d="M.6 .6v6.8l3.8-3.4z" fill="#9a9a9a"/></svg>
<div class="a" style="left:1299px;top:875px;width:13.4px;height:13.4px;background:#fff;border:1px solid #8f8f8f;box-sizing:border-box;"></div>
<svg style="left:1300.5px;top:876.5px" width="11" height="11" viewBox="0 0 11 11" fill="none" stroke="#858585" stroke-width="1.500"><path d="M1.600 5.200l2.800 3.600 4.800-7.600"/></svg>
<span class="t" style="left:1317.3px;top:873.9px;font-size:12.3px;line-height:16px;color:#000;letter-spacing:-0.271px;">Filtre</span>
<div class="a" style="left:1352.9px;top:871px;width:60.899999999999864px;height:20.6px;background:#e1e1e1;border:1px solid #adadad;box-sizing:border-box;"></div>
<span class="t" style="left:1356.3px;top:873.9px;font-size:12.3px;line-height:16px;color:#000;letter-spacing:-0.217px;">Connecter</span>
<div class="a" style="left:1423.8px;top:871px;width:32.90000000000009px;height:20.6px;background:#e1e1e1;border:1px solid #adadad;box-sizing:border-box;"></div>
<span class="t" style="left:1427.1px;top:873.9px;font-size:12.3px;line-height:16px;color:#000;letter-spacing:-0.240px;">Vider</span>
<div class="a" style="left:1467px;top:871px;width:116.70000000000005px;height:20.6px;background:#e1e1e1;border:1px solid #adadad;box-sizing:border-box;"></div>
<span class="t" style="left:1470.3px;top:873.9px;font-size:12.3px;line-height:16px;color:#000;letter-spacing:-0.374px;">Liste des permissions</span>
<div class="a" style="left:1531.5px;top:902px;width:57px;height:20.5px;background:#fcfcfc;border:1px solid #d8d8d8;box-sizing:border-box;border-top:none;"></div>
<svg style="left:1297.300px;top:906.800px" width="11" height="11" viewBox="0 0 11 11" fill="#3c3c3c"><rect x="0" y="0" width="4.6" height="4.6"/><rect x="6" y="0" width="4.6" height="4.6"/><rect x="0" y="6" width="10.6" height="4.2"/></svg>
<span class="t" style="left:1315.4px;top:903.5px;font-size:12.3px;line-height:16px;color:#444;letter-spacing:-0.183px;">Modules</span>
<svg style="left:1374px;top:905.5px" width="15" height="12" viewBox="0 0 15 12" fill="none" stroke="#3c3c3c" stroke-width="1.2"><path d="M.8 1.2h5.6l1 1 1-1h5.6v8.6h-5.6l-1 1-1-1h-5.6z"/><path d="M7.4 2.2v8.4"/></svg>
<span class="t" style="left:1394.2px;top:903.5px;font-size:12.3px;line-height:16px;color:#444;letter-spacing:-0.342px;">Librarie...</span>
<svg style="left:1457.7px;top:905.5px" width="14" height="12" viewBox="0 0 14 12"><path d="M0 1.6h5l1.2 1.4h7.2v8.2h-13.4z" fill="#d6aa62"/><path d="M0 4.400h13.400v6.800h-13.400z" fill="#dfb874"/></svg>
<span class="t" style="left:1477px;top:903.5px;font-size:12.3px;line-height:16px;color:#444;transform-origin:0 50%;transform:scaleX(0.9123);">Files M...</span>
<svg style="left:1537.500px;top:905px" width="15" height="14" viewBox="0 0 15 14" stroke="#3c3c3c" stroke-width="1.900"><path d="M0 1.300h14.400M0 5.200h9.600M0 9.100h12.400M0 13h7.400"/></svg>
<span class="t" style="left:1558.1px;top:903.5px;font-size:12.3px;line-height:16px;color:#08776a;transform-origin:0 50%;transform:scaleX(0.9336);">Logs</span>
<svg style="left:1597.4px;top:905px" width="13" height="13" viewBox="0 0 13 13" fill="none" stroke="#3c3c3c"><circle cx="8.2" cy="4.8" r="3.4" stroke-width="1.9"/><path d="M5.8 7.4l-4.8 4.8" stroke-width="2.4"/></svg>
<span class="t" style="left:1616.3px;top:903.5px;font-size:12.3px;line-height:16px;color:#444;transform-origin:0 50%;transform:scaleX(0.8980);">Recher...</span>
<svg style="left:1679.8px;top:905.6px" width="12" height="12" viewBox="0 0 12 12" fill="none"><rect x="3.6" y=".6" width="3" height="3" fill="#3c3c3c"/><rect x="8" y=".6" width="3.4" height="3.4" fill="#3c3c3c"/><circle cx="4.6" cy="7.4" r="2.4" stroke="#2a5fb0" stroke-width="1.3"/><path d="M3 9.2l-2.4 2.4" stroke="#2a5fb0" stroke-width="1.5"/></svg>
<span class="t" style="left:1699.5px;top:903.5px;font-size:12.3px;line-height:16px;color:#444;letter-spacing:-0.350px;">Trouver t...</span>
<div class="a" style="left:0px;top:929px;width:1768px;height:1px;background:#c6c6c6;"></div>
<div class="a" style="left:0px;top:930px;width:1768px;height:22px;background:#f7f7f7;"></div>
<span class="t" style="left:10.5px;top:934px;font-size:12.2px;line-height:16px;color:#555;letter-spacing:-0.252px;">B4A-Bridge: Déconnecté</span>
<span class="t" style="left:159.8px;top:934px;font-size:12.2px;line-height:16px;color:#555;transform-origin:0 50%;transform:scaleX(0.9217);">10/26/2022 5:14:54 PM</span>
<span class="t" style="left:286.2px;top:934px;font-size:12.2px;line-height:16px;color:#555;letter-spacing:-0.281px;">Fichier enregistré.</span>
<div class="a" style="left:0px;top:952px;width:1768px;height:40px;background:#d4d4d4;"></div>
<svg style="left:16px;top:964px" width="16" height="16" viewBox="0 0 16 16" fill="#000"><path d="M0 2.3l6.6-.9v6.3h-6.6zM7.4 1.3l8.6-1.2v7.6h-8.6zM0 8.4h6.6v6.3l-6.6-.9zM7.4 8.4h8.6v7.6l-8.6-1.2z"/></svg>
<div class="a" style="left:49.5px;top:953px;width:342px;height:39px;background:#fff;"></div>
<svg style="left:60px;top:964px" width="17" height="16" viewBox="0 0 17 16" fill="none" stroke="#222" stroke-width="1.3"><circle cx="10.4" cy="6" r="5"/><path d="M6.8 9.6l-5.8 5.8"/></svg>
<span class="t" style="left:88.5px;top:963px;font-size:15.6px;line-height:20px;color:#2b2b2b;transform-origin:0 50%;transform:scaleX(0.9415);">Taper ici pour rechercher</span>
<svg style="left:312px;top:953px" width="80" height="39" viewBox="0 0 80 39"><defs><linearGradient id="cas" x1="0" y1="0" x2="0" y2="1"><stop offset="0" stop-color="#d27a34"/><stop offset=".55" stop-color="#b85a24"/><stop offset="1" stop-color="#7e3410"/></linearGradient></defs>
<path d="M2 39c6-5 20-6.5 40-6.5h38v6.5z" fill="#d9a574"/>
<path d="M67.5 35c.4-6 .2-10 0-14M67.6 24l-4-6-1-7M63.6 18l-3.4-3M67.6 21l3.6-6 .6-9M71.2 15l4-4 1-6M67.6 16l-1.4-5 .6-6M62.6 11l-2-5M72 9l-2-5M75.2 11l3.6-2" fill="none" stroke="#8c3434" stroke-width="1.100"/><path d="M67.600 36v-15" stroke="#8c3434" stroke-width="1.700"/>
<path d="M66.4 36l1-5h1l1 5z" fill="#8c3434"/>
<g transform="translate(20 0) scale(0.92 1) translate(-20 0)"><path d="M20 39v-21h2v-2h1.5v2h1.5v-2h1.500v2h2v6h2.500v-15h1.500v-2h1.500v2h2v-2h1.500v2h2v-2h1.500l3 -3l3 3h1.500v2h2v-2h1.500v2h2v-2h1.500v2h1.500v15h2.500v-6h2v-2h1.500v2h1.500v-2h1.500v2h2v21z" fill="url(#cas)"/>
<path d="M31 39v-28h3v28zM52 39v-28h3v28zM20 39v-19h2.500v19zM63.500 39v-19h2v19z" fill="#a04a1c"/>
<path d="M36 12h14v27h-14z" fill="#cc6c2c" opacity=".7"/>
<path d="M38.500 28v-11c0-4 9-4 9 0v11z" fill="#7a2010"/>
<path d="M41.500 26v-8c0-2 3-2 3 0v8z" fill="#e04a20"/>
<path d="M40 39v-6c0-3 6-3 6 0v6z" fill="#6a2810"/>
<path d="M24 30h5M56 30h5M24 25h4M57 25h4" stroke="#8a3a14" stroke-width="1.4"/>
</g>
<circle cx="12" cy="15.500" r="3.400" fill="#7c4c3a"/>
<path d="M14.500 12.500l1.500-5 1.500 5.500z" fill="#c09078"/>
<path d="M8 39l3-20 5 1 4 19z" fill="#e2bd62"/>
<path d="M11 19l-4 12 3 1z" fill="#b88848"/>
<path d="M8.200 5l1.400 2.600 2.600 1.400-2.600 1.400-1.400 2.600-1.400-2.600-2.600-1.400 2.600-1.400z" fill="#d46ee6"/>
<circle cx="59" cy="2.800" r="1.800" fill="#46c686"/>
<rect x="72" y="27.500" width="3.400" height="3.400" fill="#6ad6e8"/>
</svg>
<svg style="left:408px;top:964px" width="16" height="16" viewBox="0 0 16 16" fill="none" stroke="#111" stroke-width="1.2"><path d="M.6 3.400v-2.800h10.400v2.800M.6 12.200v2.800h10.400v-2.800"/><rect x=".6" y="5.200" width="10.400" height="5.400"/><path d="M14.600 0v4.600M14.600 9v6.200" stroke-width="1.300"/><rect x="13.400" y="5.400" width="2.600" height="2.600" fill="#111" stroke="none"/></svg>
<svg style="left:454px;top:959px" width="26" height="26" viewBox="0 0 26 26"><defs><linearGradient id="eg1" x1="0" y1="0" x2="1" y2="1"><stop offset="0" stop-color="#2aa8e8"/><stop offset="1" stop-color="#0c5aa8"/></linearGradient><linearGradient id="eg2" x1="0" y1="0" x2="1" y2="0"><stop offset="0" stop-color="#22b0e8"/><stop offset="1" stop-color="#58d85a"/></linearGradient></defs>
<circle cx="13" cy="13" r="12.400" fill="url(#eg1)"/>
<path d="M1 11c1-7 8-11 14-10 7 1 11 7 10 12-1 4-5 5-9 4-2-.600-2-2-1.500-3 1.500-4-3-6-6.500-4.500-3 1.200-5 3-7 1.500z" fill="url(#eg2)"/>
<path d="M9 13.500c3-2.500 7-.500 5.500 2.500-1 2 1 3.500 4.500 3 2-.400 3.500-1 4.500-2-2 6-9 8-13 4-2.500-2.500-3-5.500-1.500-7.500z" fill="#0e62b4"/>
<path d="M8.500 14c2.500-2.500 6-1 6 1-.500 1.500-.500 2.500.5 3.500-4 .5-7-1.500-6.500-4.500z" fill="#d6d6d6"/></svg>
<svg style="left:504px;top:962px" width="24" height="20" viewBox="0 0 24 20"><path d="M1 .6h8l1.400 1.800h-9.400z" fill="#e3a52c"/><path d="M0 2.400h23.600v16.400h-23.600z" fill="#f8d052"/><path d="M0 2.400h23.600v3h-23.600z" fill="#fbe08a"/><path d="M4 18.800v-6.800l2-2.400h11.600l2 2.400v6.800h-4.400v-4.800h-6.800v4.800z" fill="#3c90de"/><path d="M4 12l2-2.400h11.600l2 2.400z" fill="#2c78c8"/></svg>
<svg style="left:552px;top:959px" width="24" height="24" viewBox="0 0 24 24"><defs><radialGradient id="bp" cx=".5" cy=".3" r=".8"><stop offset="0" stop-color="#3c52e6"/><stop offset=".55" stop-color="#1616a4"/><stop offset="1" stop-color="#04044a"/></radialGradient></defs><circle cx="12.200" cy="12" r="11.600" fill="url(#bp)"/><ellipse cx="12.200" cy="5.400" rx="7" ry="3.400" fill="#a0b0ff" opacity=".5"/><circle cx="12.200" cy="7.400" r="3" fill="#fff"/><path d="M7.400 12.800c0-1 1-1.800 2-1.800h5.600c1 0 2 .8 2 1.800v6.400c0 1-1 1.800-2 1.800h-5.600c-1 0-2-.8-2-1.800z" fill="#f4f4ff"/></svg>
<svg style="left:606px;top:959px" width="22" height="24" viewBox="0 0 22 24"><ellipse cx="8.500" cy="22.600" rx="6.500" ry="1" fill="#b4b4b4"/><path d="M7.600 17.500l-4.400 5" stroke="#8a8a8a" stroke-width="1.400"/><ellipse cx="8" cy="14.800" rx="5.800" ry="3.400" transform="rotate(24 8 14.800)" fill="#b40c16"/><path d="M5 12.500l3.500-7 7 3.500-2.500 7z" fill="#d81422"/><ellipse cx="12.400" cy="6.800" rx="7.200" ry="5.400" transform="rotate(24 12.400 6.800)" fill="#e61e2a"/><ellipse cx="11.600" cy="4.600" rx="3.600" ry="1.800" transform="rotate(24 11.600 4.600)" fill="#ff8a90"/></svg>
<svg style="left:651px;top:960px" width="24" height="24" viewBox="0 0 24 24"><defs><linearGradient id="cg" x1="0" y1="0" x2="1" y2="1"><stop offset="0" stop-color="#fff"/><stop offset="1" stop-color="#9a9aa8"/></linearGradient></defs><circle cx="11.800" cy="11.500" r="10.300" fill="url(#cg)" stroke="#0a0a0a" stroke-width="2.200"/><path d="M11.800 4.500v7.400l5 1.600M11.800 11.900l-3.600 3.600" fill="none" stroke="#222" stroke-width="1.200"/></svg>
<svg style="left:699px;top:960px" width="26" height="23" viewBox="0 0 26 23"><path d="M0 8l12.700-8 12.700 8z" fill="#0c62b4"/><path d="M.6 8h24.200v14.800h-24.200z" fill="#1e90e4"/><path d="M3.600 7.600h18.200l-9.100 7z" fill="#fff"/><path d="M.6 22.800l12.100-8.600 12.100 8.600z" fill="#2aa4f0"/></svg>
<svg style="left:751px;top:960px" width="20" height="24" viewBox="0 0 20 24"><path d="M8.400 0h3.200l5.400 17h-14z" fill="#f78a0e"/><path d="M6.700 5.400h6.600l1.400 4.400h-9.400zM4.200 13.400h11.600l1.100 3.600h-13.800z" fill="#f4f4f4"/><path d="M1.400 17h17.200l1 6h-19.200z" fill="#f08408"/><path d="M.4 21.400h19.200v1.800h-19.200z" fill="#d86a04"/></svg>
<svg style="left:798px;top:960px" width="24" height="24" viewBox="0 0 24 24"><rect width="24" height="24" fill="#e8283a"/><rect x="5" y="5.200" width="14" height="13.800" rx="1.200" fill="#fff"/><rect x="8.400" y="6.400" width="7.200" height="5" fill="#e8283a"/><rect x="8.400" y="12.800" width="7.200" height="5" fill="#e8283a"/><g fill="#e8283a"><rect x="6" y="6.600" width="1.400" height="1.600"/><rect x="6" y="9.600" width="1.400" height="1.600"/><rect x="6" y="12.600" width="1.400" height="1.600"/><rect x="6" y="15.600" width="1.400" height="1.600"/><rect x="16.600" y="6.600" width="1.400" height="1.600"/><rect x="16.600" y="9.600" width="1.400" height="1.600"/><rect x="16.600" y="12.600" width="1.400" height="1.600"/><rect x="16.600" y="15.600" width="1.400" height="1.600"/></g></svg>
<svg style="left:847px;top:959px" width="25" height="25" viewBox="0 0 25 25"><defs><radialGradient id="ff" cx=".6" cy=".2" r=".9"><stop offset="0" stop-color="#ffe040"/><stop offset=".45" stop-color="#ff8a1c"/><stop offset="1" stop-color="#e8203c"/></radialGradient></defs><circle cx="12.400" cy="13" r="11.200" fill="url(#ff)"/><path d="M4 3.600c1 1.200 1.600 2.400 1.600 4l-3 2.400z" fill="#ff9a20"/><path d="M12 2c3 .5 4.500 2.500 5 4-3-1-6 0-7 2z" fill="#ffd030"/><circle cx="12.600" cy="13" r="5.200" fill="#7a3ad8"/><path d="M8 11c2-3 7-3 9 0-2-1-3 0-4 1-1.600 1-4 1-5-1z" fill="#ff7a1c"/><circle cx="13.600" cy="10.400" r="1.700" fill="#c02ac8"/></svg>
<svg style="left:895px;top:959px" width="26" height="26" viewBox="0 0 26 26"><circle cx="12.800" cy="12.600" r="11.400" fill="#18262e" stroke="#2ed484" stroke-width="1.600"/><path d="M10.200 6.400l-1.800 9.200c-.4 2.600 4.600 2.800 5.400 0l2-9.200" fill="none" stroke="#34d8a4" stroke-width="1.700"/></svg>
<div class="a" style="left:933px;top:952px;width:43.5px;height:40px;background:#ececec;"></div>
<div class="a" style="left:933px;top:990px;width:43.5px;height:2px;background:#c8c8c8;"></div>
<div class="a" style="left:976.5px;top:952px;width:1.2px;height:40px;background:#c4c4c4;"></div>
<div class="a" style="left:944.7px;top:960.2px;width:24.3px;height:23.7px;background:#fff;"></div>
<span class="t" style="left:945.7px;top:964.3px;font-size:10.5px;line-height:16px;color:#5ad2c2;transform-origin:0 50%;transform:scaleX(1.0675);">B4A</span>
<div class="a" style="left:945.7px;top:975px;width:21.2px;height:0.8px;background:#7adacc;"></div>
<svg style="left:1519px;top:968px" width="13" height="8" viewBox="0 0 13 8" fill="none" stroke="#111" stroke-width="1.300"><path d="M.6 7l5.700-5.800 5.700 5.800"/></svg>
<svg style="left:1540.900px;top:965.500px" width="16" height="13" viewBox="0 0 16 13" fill="none" stroke="#111" stroke-width="1.100"><path d="M.6 4.400h2.600l3.400-3.400v11l-3.400-3.400h-2.600z"/><path d="M8.400 4.400c1 1.200 1 3 0 4.200M10.200 2.600c2 2.200 2 5.600 0 7.800"/><path d="M12.200 1c2.800 3 2.800 8 0 11" stroke="#999"/></svg>
<svg style="left:1564.400px;top:965.900px" width="17" height="12" viewBox="0 0 17 12" fill="none" stroke="#111" stroke-width="1.100"><path d="M2 .4v2.800M5 .4v2.800M.6 3.400h5.800v1.800c0 1.600-1.400 2.400-2.900 2.400s-2.900-.8-2.900-2.400zM3.500 7.600v4"/><path d="M7.400 3.400h8v7.400h-10.500"/><path d="M16 5.400v3.400" stroke="#777"/><path d="M8.600 5l4.400 4.400M13 5l-4.400 4.400" stroke-width="1.200"/></svg>
<svg style="left:1589px;top:965.900px" width="17" height="14" viewBox="0 0 17 14" fill="none" stroke="#111" stroke-width="1.100"><path d="M4.400 1h11.400v8.400h-11.400"/><path d="M6.400 12.600h7M9.800 9.600v3"/><rect x=".6" y="1.600" width="3.800" height="3.400"/><path d="M2.500 5v7.600"/></svg>
<span class="t" style="left:1616.4px;top:963.8px;font-size:12.3px;line-height:16px;color:#111;transform-origin:0 50%;transform:scaleX(0.8127);">FRA</span>
<span class="t" style="left:1666.7px;top:954.4px;font-size:12.3px;line-height:16px;color:#111;transform-origin:0 50%;transform:scaleX(0.8479);">17:19</span>
<span class="t" style="left:1651.6px;top:972.4px;font-size:12.3px;line-height:16px;color:#111;transform-origin:0 50%;transform:scaleX(0.9310);">26/10/2022</span>
<svg style="left:1727px;top:964px" width="17" height="16" viewBox="0 0 17 16" fill="none" stroke="#111" stroke-width="1.100"><path d="M.8 .8h14.800v10.800h-5l-2.600 2.800-2.600-2.800h-4.600z"/></svg>
<div class="a" style="left:1763.5px;top:952px;width:1px;height:40px;background:#a8a8a8;"></div>
</div></body></html>
